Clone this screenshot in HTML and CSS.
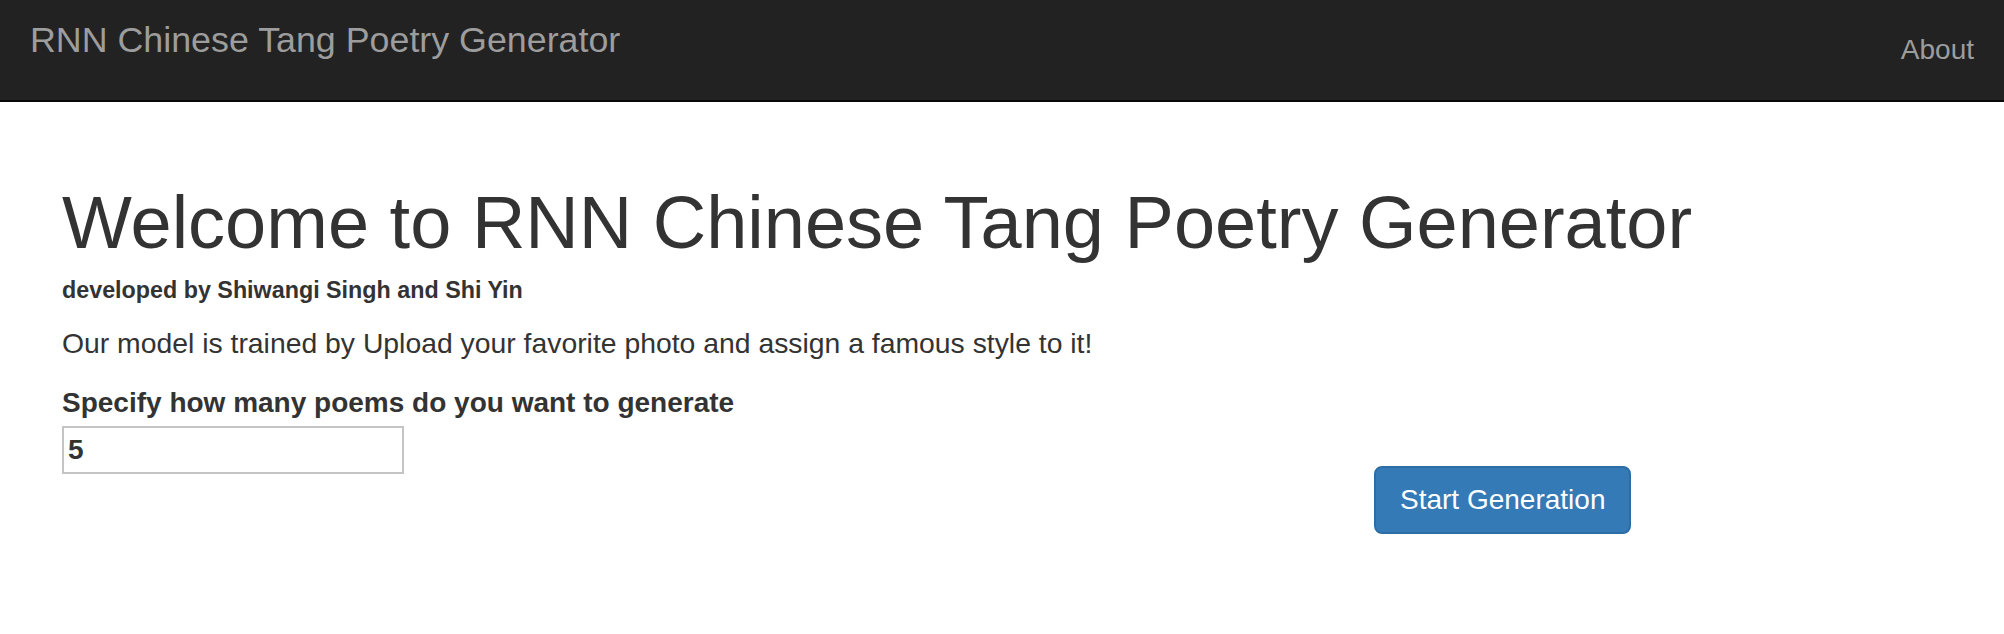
FILE: index.html
```html
<!DOCTYPE html>
<html lang="en">
<head>
<meta charset="utf-8">
<title>RNN Chinese Tang Poetry Generator</title>
<link rel="stylesheet" href="styles.css">
</head>
<body>
<nav class="navbar">
  <a class="brand" href="#">RNN Chinese Tang Poetry Generator</a>
  <ul class="nav-right">
    <li><a class="nav-link" href="#">About</a></li>
  </ul>
</nav>
<main class="container">
  <h1 class="title">Welcome to RNN Chinese Tang Poetry Generator</h1>
  <h5 class="byline">developed by Shiwangi Singh and Shi Yin</h5>
  <p class="intro">Our model is trained by Upload your favorite photo and assign a famous style to it!</p>
  <form class="form-row">
    <div class="form-group">
      <label class="field-label" for="count">Specify how many poems do you want to generate</label>
      <input class="field-input" id="count" type="text" value="5">
    </div>
    <div class="actions">
      <button class="btn-primary" type="button">Start Generation</button>
    </div>
  </form>
</main>
</body>
</html>
```

FILE: styles.css
```css
* { box-sizing: border-box; }

html, body {
  margin: 0;
  padding: 0;
  background: #fff;
  color: #333;
  font-family: "Liberation Sans", Arial, sans-serif;
}

.navbar {
  display: flex;
  justify-content: space-between;
  align-items: flex-start;
  height: 102px;
  background: #222;
  border-bottom: 2px solid #080808;
}

.brand {
  display: block;
  padding: 20px 0 0 30px;
  font-size: 35.8px;
  line-height: 40px;
  color: #9d9d9d;
  text-decoration: none;
}

.nav-right {
  list-style: none;
  margin: 0;
  padding: 0;
}

.nav-link {
  display: block;
  padding: 30px 30px 0 0;
  font-size: 28px;
  line-height: 40px;
  color: #9d9d9d;
  text-decoration: none;
}

.container {
  padding: 80px 30px 0 62px;
}

.title {
  margin: 0;
  font-size: 74px;
  font-weight: 400;
  line-height: 1.1;
  color: #333;
}

.byline {
  margin: 15px 0 0;
  font-size: 23.3px;
  font-weight: 700;
  line-height: 1.1;
}

.intro {
  margin: 19px 0 0;
  font-size: 28.35px;
  line-height: 40px;
}

.form-row {
  display: grid;
  grid-template-columns: 1312px auto;
  margin-top: 20px;
}

.field-label {
  display: block;
  margin-bottom: 3px;
  font-size: 28px;
  font-weight: 700;
  line-height: 40px;
}

.field-input {
  display: block;
  width: 342px;
  height: 48px;
  margin: 0;
  padding: 0 4px;
  border: 2px solid #c4c4c4;
  border-radius: 0;
  background: #fff;
  font-family: "Liberation Sans", Arial, sans-serif;
  font-size: 28px;
  font-weight: 700;
  color: #333;
  outline: none;
}

.actions {
  padding-top: 83px;
}

.btn-primary {
  display: inline-block;
  height: 68px;
  padding: 0 24px;
  border: 2px solid #2e6da4;
  border-radius: 8px;
  background: #337ab7;
  color: #fff;
  font-family: "Liberation Sans", Arial, sans-serif;
  font-size: 28px;
  line-height: 40px;
  cursor: pointer;
}
```
